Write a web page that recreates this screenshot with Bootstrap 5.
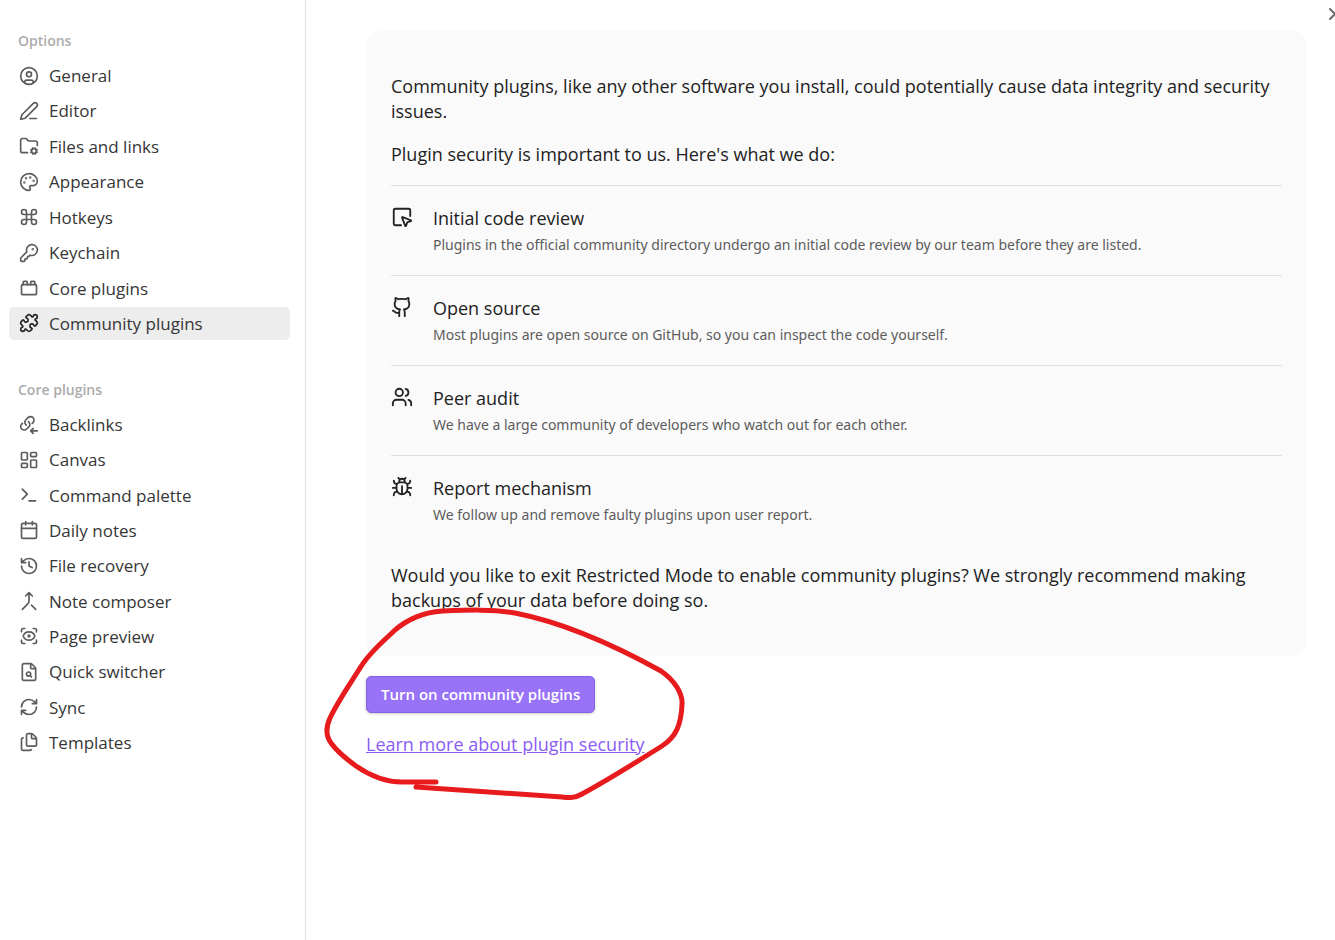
<!DOCTYPE html>
<html lang="en">
<head>
<meta charset="utf-8">
<meta name="viewport" content="width=device-width, initial-scale=1">
<title>Community plugins</title>
<link href="https://cdn.jsdelivr.net/npm/bootstrap@5.3.0/dist/css/bootstrap.min.css" rel="stylesheet">
<style>
body{font-family:"Open Sans","Noto Sans",sans-serif;font-size:18px;line-height:25px;color:#222;background:#fff}
svg{fill:none;stroke:currentColor;stroke-width:2;stroke-linecap:round;stroke-linejoin:round;flex:none}
.sidebar{width:306px;border-right:1px solid #e0e0e0;padding:31px 15px 0 9px}
.group-title{font-size:14px;line-height:20px;font-weight:600;color:#ababab;margin:0 0 8px 9px}
.group-gap{margin-top:40px}
.side-nav{display:grid;align-content:space-between;min-height:281px}
.side-nav-long{min-height:351px}
.side-link{display:flex;align-items:center;gap:10px;padding:0 10px;border-radius:5px;font-size:17px;line-height:33px;color:#363636;text-decoration:none}
.side-link svg{width:20px;height:20px;color:#5c5c5c}
.side-link.active{background:#ededed}
.side-link.active svg{color:#222}
.content-pane{padding:31px 28px 40px 60px}
.notice{background:#fafafa;border-radius:15px;padding:43px 25px}
.notice p{margin:0 0 18px}
.notice .closing{margin:18px 0 0}
.feature{display:flex;gap:20px;border-top:1px solid #e0e0e0;padding:20px 0}
.feature svg{width:22px;height:22px;color:#222}
.feature h2{font-size:18px;line-height:25px;font-weight:400;margin:0 0 3px}
.feature small{display:block;font-family:"Noto Sans","Open Sans",sans-serif;font-size:14px;line-height:21px;color:#5c5c5c}
.btn-accent{--bs-btn-color:#fff;--bs-btn-bg:#9873f7;--bs-btn-border-color:#8562df;--bs-btn-hover-color:#fff;--bs-btn-hover-bg:#a585f9;--bs-btn-hover-border-color:#8562df;--bs-btn-font-size:15px;--bs-btn-font-weight:600;--bs-btn-padding-x:14px;--bs-btn-padding-y:5px;--bs-btn-border-radius:5px;line-height:25px;box-shadow:0 1px 3px rgba(0,0,0,.2)}
.accent-link{color:#8a5cf5}
.actions{margin-top:20px;position:relative;gap:19px}
.scribble{position:absolute;left:-46px;top:-76px;width:372px;height:210px;stroke:#e71b1d;stroke-width:5;pointer-events:none}
.more{position:absolute;right:-7px;top:5px;color:#6c6c6c}
</style>
</head>
<body>
<div class="d-flex min-vh-100 position-relative overflow-hidden">
<aside class="sidebar flex-shrink-0">
<h2 class="group-title">Options</h2>
<nav class="side-nav" aria-label="Options">
<a class="side-link" href="#"><svg viewBox="0 0 24 24"><circle cx="12" cy="12" r="10"/><circle cx="12" cy="10" r="3"/><path d="M7 20.662V19a2 2 0 0 1 2-2h6a2 2 0 0 1 2 2v1.662"/></svg>General</a>
<a class="side-link" href="#"><svg viewBox="0 0 24 24"><path d="M13 21h8M21.174 6.812a1 1 0 0 0-3.986-3.987L3.842 16.174a2 2 0 0 0-.5.83l-1.321 4.352a.5.5 0 0 0 .623.622l4.353-1.32a2 2 0 0 0 .83-.497z"/></svg>Editor</a>
<a class="side-link" href="#"><svg viewBox="0 0 24 24"><circle cx="18" cy="18" r="3"/><path d="M10.3 20H4a2 2 0 0 1-2-2V5a2 2 0 0 1 2-2h3.9a2 2 0 0 1 1.69.9l.81 1.2a2 2 0 0 0 1.67.9H20a2 2 0 0 1 2 2v3.3M21.7 19.4l-.9-.3M15.2 16.9l-.9-.3M16.6 21.7l.3-.9M19.1 15.2l.3-.9M19.6 21.7l-.4-1M16.8 15.3l-.4-1M14.3 19.6l1-.4M20.7 16.8l1-.4"/></svg>Files and links</a>
<a class="side-link" href="#"><svg viewBox="0 0 24 24"><circle cx="13.5" cy="6.5" r=".5"/><circle cx="17.5" cy="10.5" r=".5"/><circle cx="8.5" cy="7.5" r=".5"/><circle cx="6.5" cy="12.5" r=".5"/><path d="M12 2C6.5 2 2 6.5 2 12s4.500 10 10 10c.926 0 1.648-.746 1.648-1.688 0-.437-.18-.835-.437-1.125-.29-.289-.438-.652-.438-1.125a1.640 1.640 0 0 1 1.668-1.668h1.996c3.051 0 5.555-2.503 5.555-5.554C21.965 6.012 17.461 2 12 2z"/></svg>Appearance</a>
<a class="side-link" href="#"><svg viewBox="0 0 24 24"><path d="M15 6v12a3 3 0 1 0 3-3H6a3 3 0 1 0 3 3V6a3 3 0 1 0-3 3h12a3 3 0 1 0-3-3"/></svg>Hotkeys</a>
<a class="side-link" href="#"><svg viewBox="0 0 24 24"><path d="M2.586 17.414A2 2 0 0 0 2 18.828V21a1 1 0 0 0 1 1h3a1 1 0 0 0 1-1v-1a1 1 0 0 1 1-1h1a1 1 0 0 0 1-1v-1a1 1 0 0 1 1-1h.172a2 2 0 0 0 1.414-.586l.814-.814a6.500 6.500 0 1 0-4-4z"/><circle cx="16.5" cy="7.5" r=".5"/></svg>Keychain</a>
<a class="side-link" href="#"><svg viewBox="0 0 24 24"><rect width="18" height="12" x="3" y="8" rx="1"/><path d="M10 8V5c0-.6-.4-1-1-1H6a1 1 0 0 0-1 1v3M19 8V5c0-.6-.4-1-1-1h-3a1 1 0 0 0-1 1v3"/></svg>Core plugins</a>
<a class="side-link active" aria-current="page" href="#"><svg viewBox="0 0 24 24"><path d="M15.390 4.390a1 1 0 0 0 1.680-.474 2.500 2.500 0 1 1 3.014 3.015 1 1 0 0 0-.474 1.680l1.683 1.682a2.414 2.414 0 0 1 0 3.414L19.610 15.390a1 1 0 0 1-1.680-.474 2.500 2.500 0 1 0-3.014 3.015 1 1 0 0 1 .474 1.680l-1.683 1.682a2.414 2.414 0 0 1-3.414 0L8.610 19.610a1 1 0 0 0-1.680.474 2.500 2.500 0 1 1-3.014-3.015 1 1 0 0 0 .474-1.680l-1.683-1.682a2.414 2.414 0 0 1 0-3.414L4.390 8.610a1 1 0 0 1 1.680.474 2.500 2.500 0 1 0 3.014-3.015 1 1 0 0 1-.474-1.680l1.683-1.682a2.414 2.414 0 0 1 3.414 0z"/></svg>Community plugins</a>
</nav>
<h2 class="group-title group-gap">Core plugins</h2>
<nav class="side-nav side-nav-long" aria-label="Core plugins">
<a class="side-link" href="#"><svg viewBox="0 0 24 24"><path d="M8.705 12C8.217 11.640 7.813 11.182 7.520 10.655C7.228 10.128 7.054 9.546 7.011 8.947C6.967 8.348 7.055 7.747 7.268 7.185C7.481 6.622 7.814 6.111 8.246 5.687L10.796 3.175C11.598 2.413 12.672 1.991 13.786 2C14.901 2.010 15.967 2.450 16.755 3.226C17.543 4.002 17.990 5.052 18 6.150C18.010 7.248 17.581 8.305 16.807 9.095L15.901 10M11.295 8C11.783 8.360 12.187 8.818 12.480 9.345C12.772 9.872 12.946 10.455 12.989 11.053C13.033 11.652 12.945 12.253 12.732 12.815C12.519 13.378 12.186 13.889 11.754 14.313L9.204 16.825C8.402 17.587 7.328 18.009 6.214 18C5.099 17.990 4.033 17.550 3.245 16.774C2.457 15.998 2.010 14.948 2 13.850C1.990 12.752 2.419 11.695 3.193 10.905L4.099 10M17 22l-3-3 3-3M22 19h-8"/></svg>Backlinks</a>
<a class="side-link" href="#"><svg viewBox="0 0 24 24"><rect width="7" height="9" x="3" y="3" rx="1"/><rect width="7" height="5" x="14" y="3" rx="1"/><rect width="7" height="9" x="14" y="12" rx="1"/><rect width="7" height="5" x="3" y="16" rx="1"/></svg>Canvas</a>
<a class="side-link" href="#"><svg viewBox="0 0 24 24"><path d="m4 17 6-6-6-6M12 19h8"/></svg>Command palette</a>
<a class="side-link" href="#"><svg viewBox="0 0 24 24"><path d="M8 2v4M16 2v4M3 10h18"/><rect width="18" height="18" x="3" y="4" rx="2"/></svg>Daily notes</a>
<a class="side-link" href="#"><svg viewBox="0 0 24 24"><path d="M3 12a9 9 0 1 0 9-9 9.750 9.750 0 0 0-6.740 2.740L3 8M3 3v5h5M12 7v5l4 2"/></svg>File recovery</a>
<a class="side-link" href="#"><svg viewBox="0 0 24 24"><path d="m8 6 4-4 4 4M12 2v10.300a4 4 0 0 1-1.172 2.872L4 22M20 22l-5-5"/></svg>Note composer</a>
<a class="side-link" href="#"><svg viewBox="0 0 24 24"><path d="M3 7V5a2 2 0 0 1 2-2h2M17 3h2a2 2 0 0 1 2 2v2M21 17v2a2 2 0 0 1-2 2h-2M7 21H5a2 2 0 0 1-2-2v-2M18.944 12.330a1 1 0 0 0 0-.660 7.500 7.500 0 0 0-13.888 0 1 1 0 0 0 0 .660 7.500 7.500 0 0 0 13.888 0"/><circle cx="12" cy="12" r="1"/></svg>Page preview</a>
<a class="side-link" href="#"><svg viewBox="0 0 24 24"><path d="M6 22a2 2 0 0 1-2-2V4a2 2 0 0 1 2-2h8a2.400 2.400 0 0 1 1.704.706l3.588 3.588A2.400 2.400 0 0 1 20 8v12a2 2 0 0 1-2 2zM14 2v5a1 1 0 0 0 1 1h5M13.300 16.300 15 18"/><circle cx="11.5" cy="14.5" r="2.5"/></svg>Quick switcher</a>
<a class="side-link" href="#"><svg viewBox="0 0 24 24"><path d="M3 12a9 9 0 0 1 9-9 9.750 9.750 0 0 1 6.740 2.740L21 8M21 3v5h-5M21 12a9 9 0 0 1-9 9 9.750 9.750 0 0 1-6.740-2.740L3 16M8 16H3v5"/></svg>Sync</a>
<a class="side-link" href="#"><svg viewBox="0 0 24 24"><path d="M15 2h-4a2 2 0 0 0-2 2v11a2 2 0 0 0 2 2h8a2 2 0 0 0 2-2V8M16.706 2.706A2.400 2.400 0 0 0 15 2v5a1 1 0 0 0 1 1h5a2.400 2.400 0 0 0-.706-1.706zM5 7a2 2 0 0 0-2 2v11a2 2 0 0 0 2 2h8a2 2 0 0 0 1.732-1"/></svg>Templates</a>
</nav>
</aside>
<main class="content-pane flex-grow-1">
<section class="notice">
<p>Community plugins, like any other software you install, could potentially cause data integrity and security issues.</p>
<p>Plugin security is important to us. Here's what we do:</p>
<div class="feature"><svg viewBox="0 0 24 24"><path d="M12.034 12.681a.498.498 0 0 1 .647-.647l9 3.500a.5.5 0 0 1-.033.943l-3.444 1.068a1 1 0 0 0-.660.660l-1.067 3.443a.5.5 0 0 1-.943.033zM21 11V5a2 2 0 0 0-2-2H5a2 2 0 0 0-2 2v14a2 2 0 0 0 2 2h6"/></svg><div><h2>Initial code review</h2><small>Plugins in the official community directory undergo an initial code review by our team before they are listed.</small></div></div>
<div class="feature"><svg viewBox="0 0 24 24"><path d="M15 22v-4a4.800 4.800 0 0 0-1-3.500c3 0 6-2 6-5.500.08-1.250-.27-2.480-1-3.500.28-1.150.28-2.350 0-3.500 0 0-1 0-3 1.500-2.640-.5-5.360-.5-8 0C6 2 5 2 5 2c-.3 1.150-.3 2.350 0 3.500A5.403 5.403 0 0 0 4 9c0 3.500 3 5.500 6 5.500-.39.49-.68 1.050-.85 1.650-.17.6-.22 1.230-.15 1.850v4M9 18c-4.510 2-5-2-7-2"/></svg><div><h2>Open source</h2><small>Most plugins are open source on GitHub, so you can inspect the code yourself.</small></div></div>
<div class="feature"><svg viewBox="0 0 24 24"><path d="M16 21v-2a4 4 0 0 0-4-4H6a4 4 0 0 0-4 4v2M22 21v-2a4 4 0 0 0-3-3.870M16 3.130a4 4 0 0 1 0 7.750"/><circle cx="9" cy="7" r="4"/></svg><div><h2>Peer audit</h2><small>We have a large community of developers who watch out for each other.</small></div></div>
<div class="feature"><svg viewBox="0 0 24 24"><path d="m8 2 1.880 1.880M14.120 3.880 16 2M9 7.130V6a3 3 0 1 1 6 0v1.130M14 7a4 4 0 0 1 4 4v3a6 6 0 0 1-12 0v-3a4 4 0 0 1 4-4zM12 20v-9M3 5a4 4 0 0 0 3.550 3.970M6 13H2M3 21a4 4 0 0 1 3.810-4M21 5a4 4 0 0 1-3.550 3.970M22 13h-4M21 21a4 4 0 0 0-3.810-4"/></svg><div><h2>Report mechanism</h2><small>We follow up and remove faulty plugins upon user report.</small></div></div>
<p class="closing">Would you like to exit Restricted Mode to enable community plugins? We strongly recommend making backups of your data before doing so.</p>
</section>
<div class="actions d-flex flex-column align-items-start">
<button type="button" class="btn btn-accent">Turn on community plugins</button>
<a class="accent-link" href="#">Learn more about plugin security</a>
<svg class="scribble" viewBox="320 600 372 210" aria-hidden="true"><path d="M436 782H402C384 782 369 775 356 766C345 758 336 750 331 743C325 735 326 727 330 718C338 701 350 684 360 668C368 655 381 643 394 631C407 619 425 612 442 611C468 610 493 609 515 613C566 623 614 645 661 671C674 680 683 693 682 705C681 725 676 737 662 746C635 763 608 780 582 794C575 798 570 798 562 797L416 787"/></svg>
</div>
</main>
<svg class="more" width="18" height="18" viewBox="0 0 18 18" aria-hidden="true"><path d="m6 4 5 5-5 5"/></svg>
</div>
<script src="https://cdn.jsdelivr.net/npm/bootstrap@5.3.0/dist/js/bootstrap.bundle.min.js"></script>
</body>
</html>
